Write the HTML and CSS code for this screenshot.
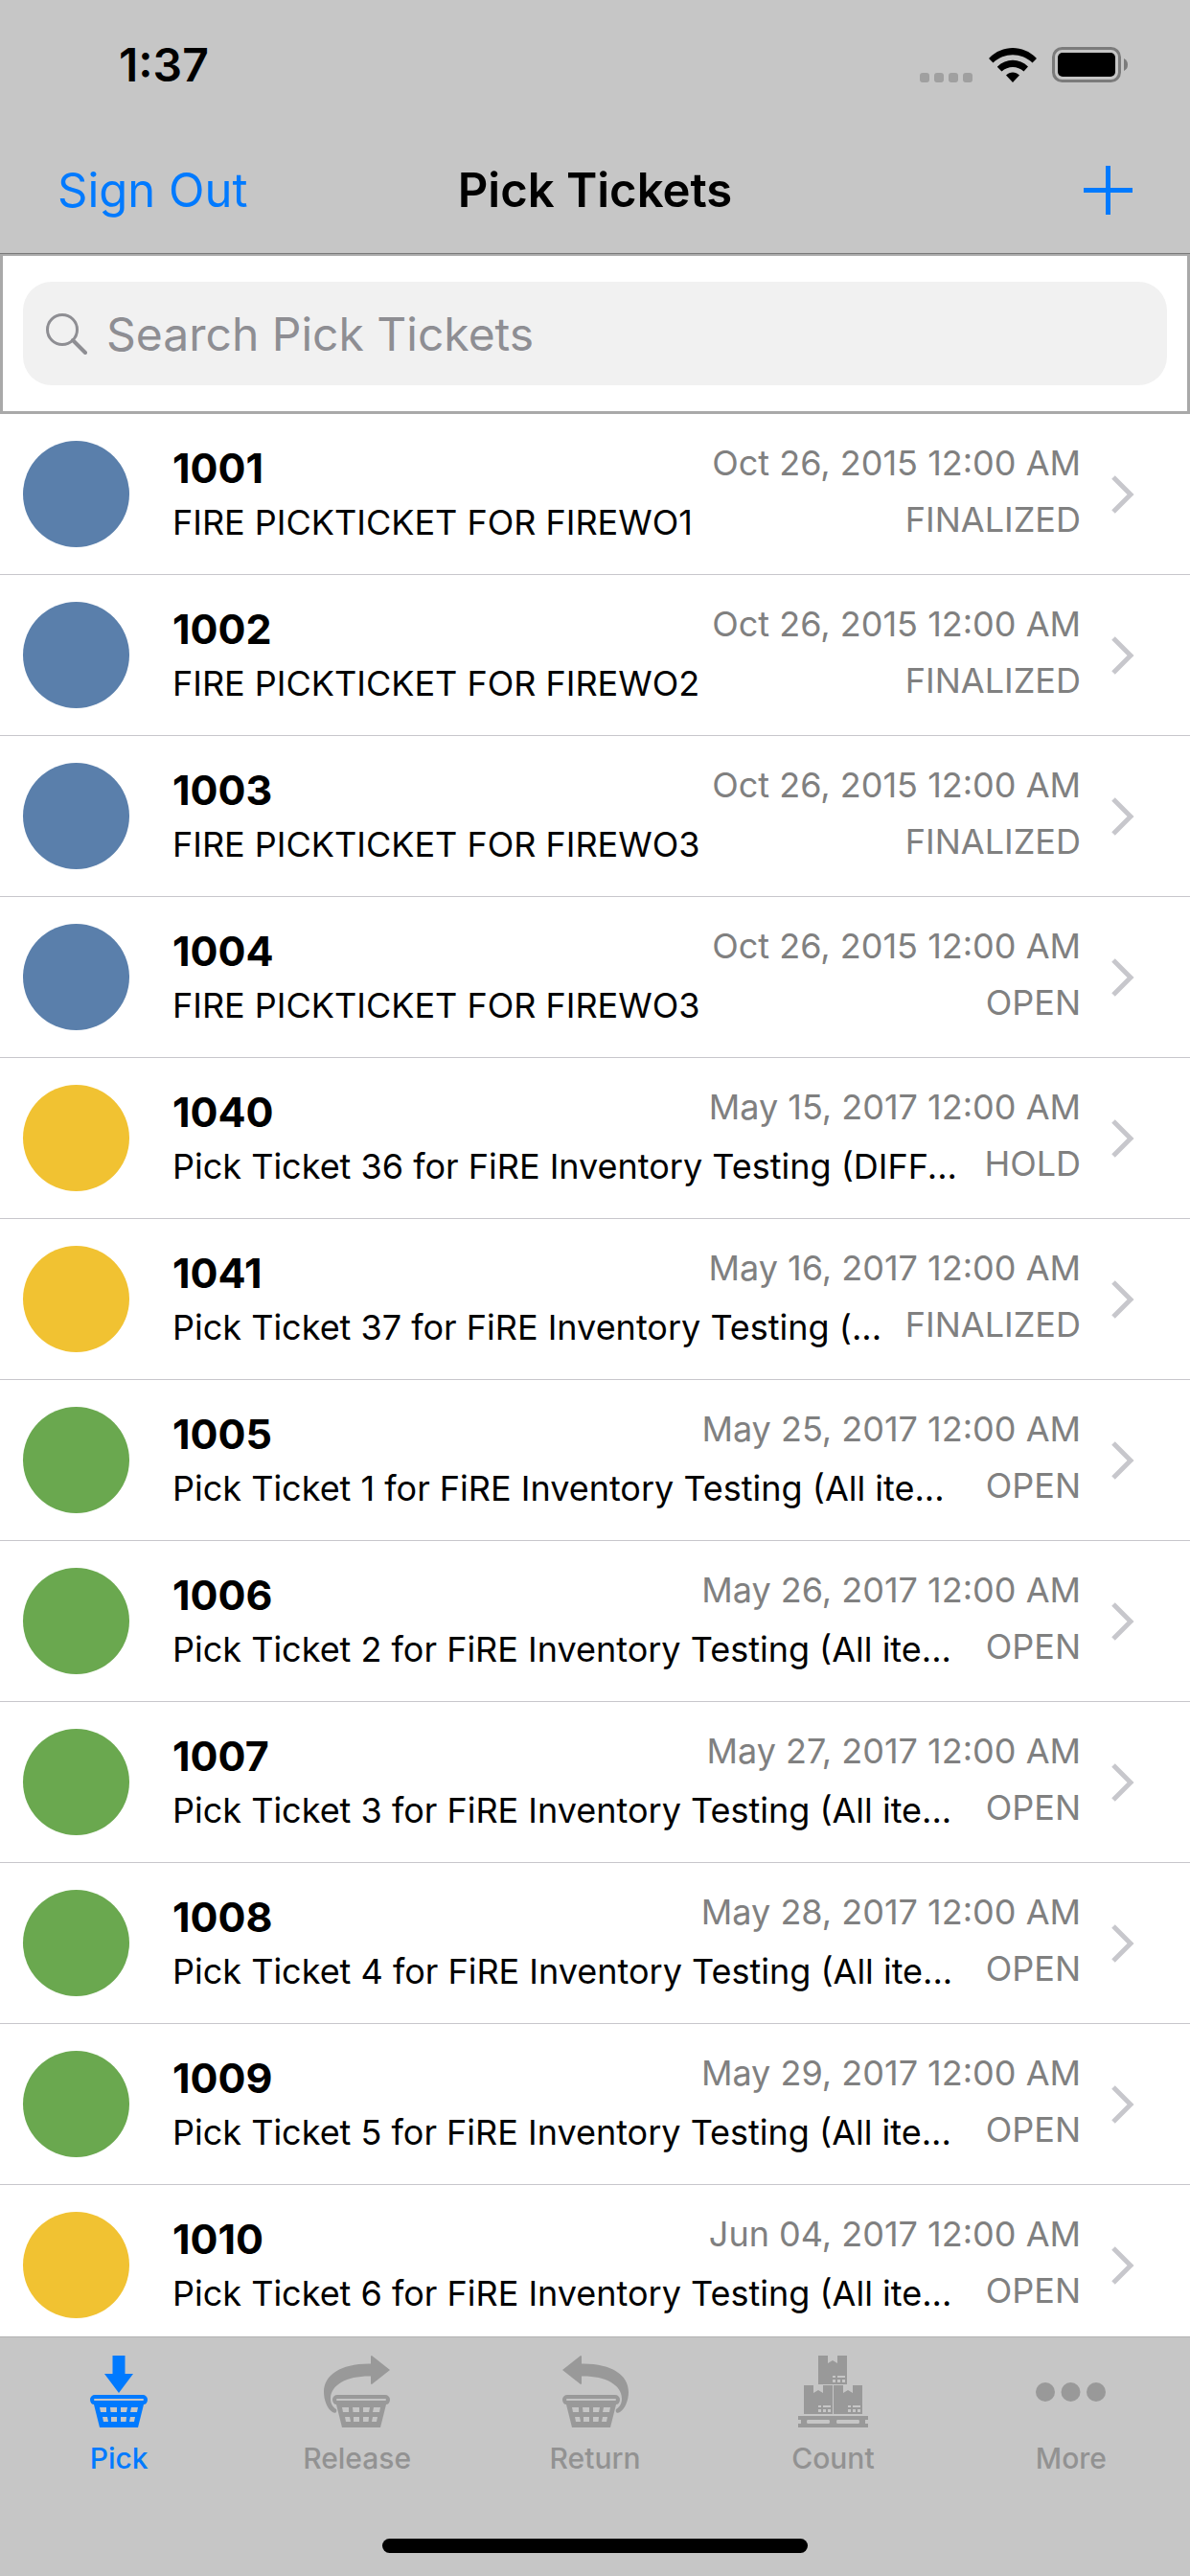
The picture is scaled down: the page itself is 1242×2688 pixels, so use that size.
FILE: index.html
```html
<!DOCTYPE html>
<html lang="en">
<head>
    <meta charset="UTF-8">
    <meta name="viewport" content="width=device-width, initial-scale=1.0">
    <title>Pick Tickets</title>
    <link rel="stylesheet" href="styles.css">
</head>
<body>

<!-- Shared icons -->
<svg class="icon-defs" aria-hidden="true">
    <symbol id="chevron" viewBox="0 0 24 40">
        <path d="M2 2L20 20L2 38" fill="none" stroke="currentColor" stroke-width="5"/>
    </symbol>
    <symbol id="basket" viewBox="0 0 60 34">
        <path fill="currentColor" fill-rule="evenodd" d="M5 0H55A5 5 0 0 1 60 5C60 8 58 10 56 10L50 34H10L4 10C2 10 0 8 0 5A5 5 0 0 1 5 0ZM5 4Q4 4 4 5Q4 6 5 6H55Q56 6 56 5Q56 4 55 4ZM10 13L11 18H17V13ZM21 13L21.500 18H28V13ZM32 13V18H38L39 13ZM43 13L42 18H49L50 13ZM13 23L14 28H19L18 23ZM22 23V28H28V23ZM32 23V28H37.500L38 23ZM42 23L41 28H46L47 23Z"/>
    </symbol>
    <symbol id="carry" viewBox="0 0 69 60">
        <path fill="currentColor" d="M50 0L69 15L50 30Q49 30 49 29V21.500C25 21 7 30 7 45C7 51 10 54 13 56C14 59 12 61 9 59C4 56 0 47 0 38C0 20 18 8 49 8.500V1Q49 0 50 0Z"/>
    </symbol>
    <symbol id="box" viewBox="0 0 30 30">
        <path fill="currentColor" fill-rule="evenodd" d="M0 0H10V8L15 5L20 8V0H30V30H0ZM15 21V23H18V21ZM20 21V23H28V21ZM15 25V28H18V25ZM20 25V28H23V25ZM25 25V28H28V25Z"/>
    </symbol>
</svg>

<header class="header">
    <div class="status-bar">
        <span class="clock">1:37</span>
        <div class="status-icons">
            <svg width="56" height="10" viewBox="0 0 56 10" fill="#a0a0a0">
                <rect width="10" height="10" rx="3"/>
                <rect x="15" width="10" height="10" rx="3"/>
                <rect x="30" width="10" height="10" rx="3"/>
                <rect x="45" width="10" height="10" rx="3"/>
            </svg>
            <svg width="50" height="36" viewBox="0 0 50 36">
                <path d="M0.500 10.500C14 -3.500 36 -3.500 49.500 10.500Q50 11 49.500 11.500L45.500 15.500C34 4.500 16 4.500 4.500 15.500L0.500 11.500Q0 11 0.500 10.500ZM9 19.500C18 10.500 32 10.500 41 19.500L36.500 24.500C30 18.500 20 18.500 13.500 24.500L9 20ZM18 28.500C22 24.500 28 24.500 32 28.500L25 36Z"/>
            </svg>
            <svg width="80" height="37" viewBox="0 0 80 37">
                <rect x="1.500" y="1.500" width="69" height="34" rx="9" fill="none" stroke="#7b7b7b" stroke-width="3"/>
                <rect x="6" y="6" width="60" height="25" rx="5"/>
                <path d="M75 12Q79 14 79 18.500Q79 23 75 25Z" fill="#7b7b7b"/>
            </svg>
        </div>
    </div>
    <nav class="nav-bar">
        <button class="sign-out">Sign Out</button>
        <h1>Pick Tickets</h1>
        <button class="add-btn" aria-label="Add ticket">
            <svg width="51" height="51" viewBox="0 0 51 51">
                <path d="M25.500 0V51M0 25.500H51" stroke="currentColor" stroke-width="5"/>
            </svg>
        </button>
    </nav>
</header>

<form class="search-bar">
    <label class="search-field">
        <svg width="43" height="43" viewBox="0 0 43 43" fill="none" stroke="currentColor">
            <circle cx="17" cy="17" r="15.500" stroke-width="3"/>
            <path d="M28 28L41 41" stroke-width="4" stroke-linecap="round"/>
        </svg>
        <input type="search" placeholder="Search Pick Tickets" aria-label="Search Pick Tickets">
    </label>
</form>

<main class="ticket-list">
    <a class="ticket" href="#1001">
        <span class="dot blue"></span>
        <div class="info">
            <div class="line"><h2>1001</h2><span class="meta">Oct 26, 2015 12:00 AM</span></div>
            <div class="line"><p>FIRE PICKTICKET FOR FIREWO1</p><span class="meta">FINALIZED</span></div>
        </div>
        <svg class="chevron"><use href="#chevron"/></svg>
    </a>
    <a class="ticket" href="#1002">
        <span class="dot blue"></span>
        <div class="info">
            <div class="line"><h2>1002</h2><span class="meta">Oct 26, 2015 12:00 AM</span></div>
            <div class="line"><p>FIRE PICKTICKET FOR FIREWO2</p><span class="meta">FINALIZED</span></div>
        </div>
        <svg class="chevron"><use href="#chevron"/></svg>
    </a>
    <a class="ticket" href="#1003">
        <span class="dot blue"></span>
        <div class="info">
            <div class="line"><h2>1003</h2><span class="meta">Oct 26, 2015 12:00 AM</span></div>
            <div class="line"><p>FIRE PICKTICKET FOR FIREWO3</p><span class="meta">FINALIZED</span></div>
        </div>
        <svg class="chevron"><use href="#chevron"/></svg>
    </a>
    <a class="ticket" href="#1004">
        <span class="dot blue"></span>
        <div class="info">
            <div class="line"><h2>1004</h2><span class="meta">Oct 26, 2015 12:00 AM</span></div>
            <div class="line"><p>FIRE PICKTICKET FOR FIREWO3</p><span class="meta">OPEN</span></div>
        </div>
        <svg class="chevron"><use href="#chevron"/></svg>
    </a>
    <a class="ticket" href="#1040">
        <span class="dot yellow"></span>
        <div class="info">
            <div class="line"><h2>1040</h2><span class="meta">May 15, 2017 12:00 AM</span></div>
            <div class="line"><p>Pick Ticket 36 for FiRE Inventory Testing (DIFF...</p><span class="meta">HOLD</span></div>
        </div>
        <svg class="chevron"><use href="#chevron"/></svg>
    </a>
    <a class="ticket" href="#1041">
        <span class="dot yellow"></span>
        <div class="info">
            <div class="line"><h2>1041</h2><span class="meta">May 16, 2017 12:00 AM</span></div>
            <div class="line"><p>Pick Ticket 37 for FiRE Inventory Testing (...</p><span class="meta">FINALIZED</span></div>
        </div>
        <svg class="chevron"><use href="#chevron"/></svg>
    </a>
    <a class="ticket" href="#1005">
        <span class="dot green"></span>
        <div class="info">
            <div class="line"><h2>1005</h2><span class="meta">May 25, 2017 12:00 AM</span></div>
            <div class="line"><p>Pick Ticket 1 for FiRE Inventory Testing (All ite...</p><span class="meta">OPEN</span></div>
        </div>
        <svg class="chevron"><use href="#chevron"/></svg>
    </a>
    <a class="ticket" href="#1006">
        <span class="dot green"></span>
        <div class="info">
            <div class="line"><h2>1006</h2><span class="meta">May 26, 2017 12:00 AM</span></div>
            <div class="line"><p>Pick Ticket 2 for FiRE Inventory Testing (All ite...</p><span class="meta">OPEN</span></div>
        </div>
        <svg class="chevron"><use href="#chevron"/></svg>
    </a>
    <a class="ticket" href="#1007">
        <span class="dot green"></span>
        <div class="info">
            <div class="line"><h2>1007</h2><span class="meta">May 27, 2017 12:00 AM</span></div>
            <div class="line"><p>Pick Ticket 3 for FiRE Inventory Testing (All ite...</p><span class="meta">OPEN</span></div>
        </div>
        <svg class="chevron"><use href="#chevron"/></svg>
    </a>
    <a class="ticket" href="#1008">
        <span class="dot green"></span>
        <div class="info">
            <div class="line"><h2>1008</h2><span class="meta">May 28, 2017 12:00 AM</span></div>
            <div class="line"><p>Pick Ticket 4 for FiRE Inventory Testing (All ite...</p><span class="meta">OPEN</span></div>
        </div>
        <svg class="chevron"><use href="#chevron"/></svg>
    </a>
    <a class="ticket" href="#1009">
        <span class="dot green"></span>
        <div class="info">
            <div class="line"><h2>1009</h2><span class="meta">May 29, 2017 12:00 AM</span></div>
            <div class="line"><p>Pick Ticket 5 for FiRE Inventory Testing (All ite...</p><span class="meta">OPEN</span></div>
        </div>
        <svg class="chevron"><use href="#chevron"/></svg>
    </a>
    <a class="ticket" href="#1010">
        <span class="dot yellow"></span>
        <div class="info">
            <div class="line"><h2>1010</h2><span class="meta">Jun 04, 2017 12:00 AM</span></div>
            <div class="line"><p>Pick Ticket 6 for FiRE Inventory Testing (All ite...</p><span class="meta">OPEN</span></div>
        </div>
        <svg class="chevron"><use href="#chevron"/></svg>
    </a>
</main>

<footer class="footer">
    <nav class="tab-bar">
        <a class="tab active" href="#pick">
            <svg width="60" height="75" viewBox="0 0 60 75">
                <path fill="currentColor" d="M23.500 0H36.500V19H45L30 39L15 19H23.500Z"/>
                <use href="#basket" y="41" width="60" height="34"/>
            </svg>
            <span>Pick</span>
        </a>
        <a class="tab" href="#release">
            <svg width="69" height="75" viewBox="0 0 69 75">
                <use href="#carry" width="69" height="60"/>
                <use href="#basket" x="9" y="41" width="60" height="34"/>
            </svg>
            <span>Release</span>
        </a>
        <a class="tab" href="#return">
            <svg width="69" height="75" viewBox="0 0 69 75">
                <use href="#carry" width="69" height="60" transform="translate(69 0) scale(-1 1)"/>
                <use href="#basket" y="41" width="60" height="34"/>
            </svg>
            <span>Return</span>
        </a>
        <a class="tab" href="#count">
            <svg width="73" height="75" viewBox="0 0 73 75">
                <use href="#box" x="21" y="0" width="30" height="30"/>
                <use href="#box" x="6" y="31" width="30" height="30"/>
                <use href="#box" x="37" y="31" width="30" height="30"/>
                <path fill="currentColor" fill-rule="evenodd" d="M0 63H73V67H70V71H73V75H0V71H3V67H0ZM10 67Q9 67 9 69Q9 71 10 71H32Q33 71 33 69Q33 67 32 67ZM41 67Q40 67 40 69Q40 71 41 71H63Q64 71 64 69Q64 67 63 67Z"/>
            </svg>
            <span>Count</span>
        </a>
        <a class="tab" href="#more">
            <svg width="73" height="75" viewBox="0 0 73 75" fill="currentColor">
                <circle cx="10" cy="38" r="10"/>
                <circle cx="36.500" cy="38" r="10"/>
                <circle cx="63" cy="38" r="10"/>
            </svg>
            <span>More</span>
        </a>
    </nav>
    <div class="home-indicator"></div>
</footer>

</body>
</html>
```
FILE: styles.css
```css
* {
    box-sizing: border-box;
}

body {
    font-family: Inter, 'Liberation Sans', sans-serif;
    background-color: #fff;
    color: #000;
    margin: 0;
    height: 100vh;
    display: flex;
    flex-direction: column;
}

h1, h2, p {
    margin: 0;
}

a {
    color: inherit;
    text-decoration: none;
}

button {
    font: inherit;
    color: #007aff;
    background: none;
    border: none;
    padding: 0;
    cursor: pointer;
}

svg {
    display: block;
    flex-shrink: 0;
}

.icon-defs {
    display: none;
}

/* Header */
.header {
    background-color: #c6c6c6;
    border-bottom: 1px solid #7a7a7a;
}

.status-bar {
    height: 132px;
    padding: 3px 64px 0 124px;
    display: flex;
    justify-content: space-between;
    align-items: center;
}

.clock {
    font-size: 48px;
    font-weight: 600;
}

.status-icons {
    display: flex;
    align-items: flex-end;
    gap: 16px;
}

.nav-bar {
    height: 132px;
    padding: 0 60px;
    display: grid;
    grid-template-columns: 1fr auto 1fr;
    align-items: center;
    font-size: 49px;
}

.nav-bar h1 {
    font-size: 49px;
    font-weight: 600;
}

.sign-out {
    justify-self: start;
}

.add-btn {
    justify-self: end;
}

/* Search */
.search-bar {
    border: 3px solid #a9a9a9;
    border-top-width: 2px;
    padding: 27px 21px;
}

.search-field {
    display: flex;
    align-items: center;
    gap: 20px;
    height: 108px;
    padding: 0 24px;
    border-radius: 30px;
    background-color: #f1f1f1;
    color: #8e8e93;
}

.search-field input {
    flex: 1;
    min-width: 0;
    font: inherit;
    font-size: 48px;
    border: none;
    outline: none;
    padding: 0;
    background: none;
}

.search-field input::placeholder {
    color: #8e8e93;
}

/* Ticket list */
.ticket-list {
    flex: 1;
    min-height: 0;
    overflow: hidden;
}

.ticket {
    display: flex;
    align-items: center;
    padding: 28px 58px 28px 24px;
    border-bottom: 1px solid #c8c7cc;
}

.dot {
    width: 111px;
    height: 111px;
    border-radius: 50%;
    flex-shrink: 0;
}

.blue {
    background-color: #5a7fab;
}

.yellow {
    background-color: #f1c232;
}

.green {
    background-color: #6aa84f;
}

.info {
    flex: 1;
    min-width: 0;
    margin: 0 32px 0 45px;
    display: flex;
    flex-direction: column;
    gap: 5px;
}

.line {
    display: flex;
    justify-content: space-between;
    gap: 20px;
}

.line h2 {
    font-size: 43px;
    font-weight: 700;
    line-height: 54px;
}

.line p {
    font-size: 36px;
    line-height: 50px;
    white-space: nowrap;
}

.meta {
    font-size: 36px;
    line-height: 44px;
    color: #808080;
    white-space: nowrap;
}

.chevron {
    width: 24px;
    height: 40px;
    color: #c7c7cc;
}

/* Tab bar */
.footer {
    background-color: #c6c6c6;
    border-top: 1px solid #b2b2b2;
    padding: 19px 0 24px;
}

.tab-bar {
    display: flex;
}

.tab {
    flex: 1;
    display: flex;
    flex-direction: column;
    align-items: center;
    gap: 14px;
    font-size: 30px;
    font-weight: 500;
    line-height: 36px;
    color: #929292;
}

.tab svg {
    color: #999;
}

.tab.active, .tab.active svg {
    color: #007aff;
}

.home-indicator {
    width: 444px;
    height: 15px;
    margin: 66px auto 0;
    border-radius: 8px;
    background-color: #000;
}
```
